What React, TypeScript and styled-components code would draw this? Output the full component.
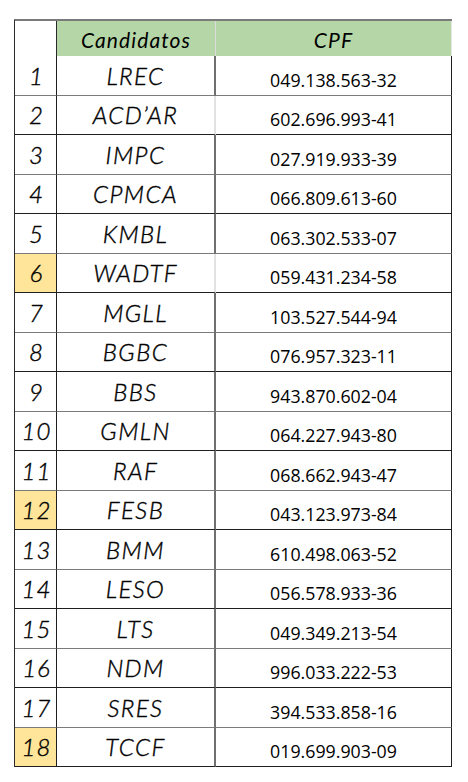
import styled, { createGlobalStyle } from "styled-components";

const GlobalStyle = createGlobalStyle`
  body {
    margin: 0;
    background: #ffffff;
  }
`;

const Page = styled.div`
  padding: 19px 0 0 14px;
`;

const Table = styled.div`
  border-left: 1.5px solid #2b2b2b;
  border-top: 2px solid #7a7a7a;
  display: grid;
  grid-auto-rows: 39.5px;
  grid-template-columns: 42px 159px 236px;
  grid-template-rows: 35px;
  width: 437px;
`;

const Cell = styled.div`
  align-items: center;
  box-sizing: border-box;
  color: #000;
  display: flex;
  justify-content: center;
`;

const CornerCell = styled(Cell)`
  background: #ffffff;
  border-right: 1.5px solid #2b2b2b;
`;

const HeaderCell = styled(Cell)<{ $last?: boolean }>`
  background: #b5d6a6;
  border-right: ${(p) =>
    p.$last ? "1.5px solid #e6e6e6" : "1.5px solid #dcdcdc"};
  font-family: Lato, "Open Sans", sans-serif;
  font-size: 21px;
  font-style: italic;
  letter-spacing: 1.1px;
  padding-top: 2px;
`;

const IndexCell = styled(Cell)<{ $highlight?: boolean; $dark?: boolean }>`
  background: ${(p) => (p.$highlight ? "#ffe599" : "#ffffff")};
  border-bottom: 1.5px solid ${(p) => (p.$dark ? "#1f1f1f" : "#7a7a7a")};
  border-right: 1.5px solid #1f1f1f;
  font-family: Lato, "Open Sans", sans-serif;
  font-size: 24px;
  font-style: italic;
  font-weight: 300;
  -webkit-text-stroke: 0.4px #000;
  letter-spacing: 1px;
  padding-left: 2px;
`;

const NameCell = styled(Cell)<{ $soft?: boolean; $dark?: boolean }>`
  border-bottom: 1.5px solid ${(p) => (p.$dark ? "#1f1f1f" : "#7a7a7a")};
  border-right: 2px solid ${(p) => (p.$soft ? "#e2e2e2" : "#707070")};
  font-family: Lato, "Open Sans", sans-serif;
  font-size: 24px;
  font-style: italic;
  font-weight: 300;
  -webkit-text-stroke: 0.4px #000;
  letter-spacing: 1.4px;
`;

const CpfCell = styled(Cell)<{ $dark?: boolean }>`
  align-items: flex-end;
  border-bottom: 1.5px solid ${(p) => (p.$dark ? "#1f1f1f" : "#7a7a7a")};
  border-right: 1.5px solid #1f1f1f;
  font-family: "Open Sans", sans-serif;
  font-size: 17.8px;
  padding-bottom: 3px;
`;

const rows = [
  { name: "LREC", cpf: "049.138.563-32" },
  { name: "ACD’AR", cpf: "602.696.993-41" },
  { name: "IMPC", cpf: "027.919.933-39" },
  { name: "CPMCA", cpf: "066.809.613-60" },
  { name: "KMBL", cpf: "063.302.533-07" },
  { name: "WADTF", cpf: "059.431.234-58" },
  { name: "MGLL", cpf: "103.527.544-94" },
  { name: "BGBC", cpf: "076.957.323-11" },
  { name: "BBS", cpf: "943.870.602-04" },
  { name: "GMLN", cpf: "064.227.943-80" },
  { name: "RAF", cpf: "068.662.943-47" },
  { name: "FESB", cpf: "043.123.973-84" },
  { name: "BMM", cpf: "610.498.063-52" },
  { name: "LESO", cpf: "056.578.933-36" },
  { name: "LTS", cpf: "049.349.213-54" },
  { name: "NDM", cpf: "996.033.222-53" },
  { name: "SRES", cpf: "394.533.858-16" },
  { name: "TCCF", cpf: "019.699.903-09" },
];

const highlighted = [6, 12, 18];
const softDivider = [2, 6];

export default function App() {
  return (
    <Page>
      <GlobalStyle />
      <Table>
        <CornerCell />
        <HeaderCell>Candidatos</HeaderCell>
        <HeaderCell $last>CPF</HeaderCell>
        {rows.map((row, i) => {
          const n = i + 1;
          const dark = n % 2 === 0 || n === rows.length;
          return [
            <IndexCell key={`i${n}`} $highlight={highlighted.includes(n)} $dark={dark}>
              {n}
            </IndexCell>,
            <NameCell key={`n${n}`} $soft={softDivider.includes(n)} $dark={dark}>
              {row.name}
            </NameCell>,
            <CpfCell key={`c${n}`} $dark={dark}>
              {row.cpf}
            </CpfCell>,
          ];
        })}
      </Table>
    </Page>
  );
}
